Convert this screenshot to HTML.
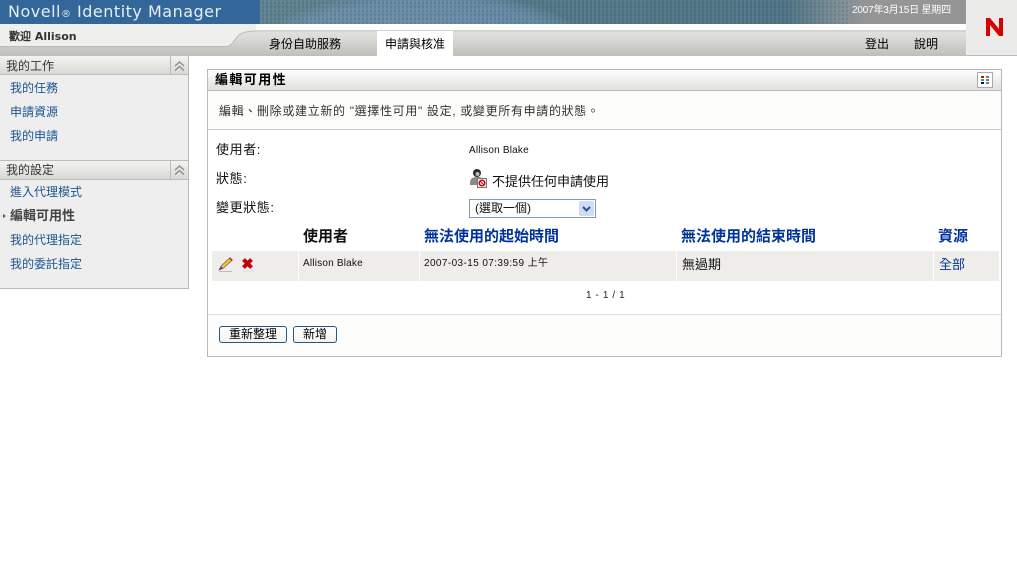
<!DOCTYPE html>
<html><head><meta charset="utf-8"><style>
html,body{margin:0;padding:0;background:#fff;width:1017px;height:571px;overflow:hidden}
body{font-family:"Liberation Sans","WenQuanYi Zen Hei","Noto Sans CJK TC",sans-serif;font-size:12px;color:#000;position:relative}
.a{position:absolute;white-space:nowrap;line-height:14px}
.b{position:absolute}
.lk{color:#1a5590}
.th{font-weight:bold;font-size:15px;line-height:16px}
.bl{color:#003399}
.btn{position:absolute;box-sizing:border-box;height:17px;border:1px solid #1b5a8a;border-radius:3px;background:linear-gradient(#fff,#f3f3ee);text-align:center;line-height:15px;font-size:12px}
.lb{font-size:13px;color:#111;letter-spacing:.6px}
</style></head><body>
<div class="b" style="left:0;top:0;width:260px;height:24px;background:#336699"></div>
<svg class="b" style="left:260px;top:0" width="706" height="24">
<defs><linearGradient id="g"><stop offset="0" stop-color="#5f808e"/><stop offset=".4" stop-color="#517786"/><stop offset=".75" stop-color="#4e7485"/><stop offset=".82" stop-color="#7b8c93"/><stop offset=".86" stop-color="#959595"/><stop offset="1" stop-color="#959595"/></linearGradient>
<radialGradient id="e"><stop offset="0" stop-color="#6f92b4" stop-opacity=".8"/><stop offset=".85" stop-color="#6f92b4" stop-opacity=".6"/><stop offset="1" stop-color="#6f92b4" stop-opacity=".15"/></radialGradient>
<pattern id="t" width="4" height="4" patternUnits="userSpaceOnUse"><rect width="2" height="4" fill="#fff" opacity=".04"/><rect x="2" y="2" width="2" height="2" fill="#000" opacity=".07"/></pattern></defs>
<rect width="706" height="24" fill="url(#g)"/>
<ellipse cx="165" cy="50" rx="165" ry="58" fill="url(#e)"/>
<rect width="590" height="24" fill="url(#t)"/>
</svg>
<div class="a" style="left:8px;top:1px;font-size:16px;line-height:22px;color:#e6eef5;font-family:'DejaVu Sans',sans-serif;letter-spacing:.5px">Novell<span style="font-size:10px">®</span> Identity Manager</div>
<div class="a" style="left:852px;top:4px;font-size:10px;color:#fff;line-height:13px;letter-spacing:-.2px">2007年3月15日 星期四</div>

<div class="b" style="left:0;top:24px;width:966px;height:32px;background:linear-gradient(#e6e7e3,#dcddd9 40%,#bebfb9)"></div>
<svg class="b" style="left:0;top:24px" width="966" height="32"><path d="M0 0H966V7H256C248 7 243 8 239 11C235 14 233 22 226 22H0Z" fill="#efefed"/><path d="M0 22.500H226C233 22 235 14 239 11C243 8 248 7 256 7" fill="none" stroke="#b9bab4"/><rect x="256" y="0" width="710" height="6" fill="#fff"/><rect x="256" y="6" width="710" height="2" fill="#d4d5d0"/></svg>
<div class="a" style="left:9px;top:30px;font-weight:bold;color:#333;font-family:'DejaVu Sans','WenQuanYi Zen Hei',sans-serif;font-size:11px">歡迎 Allison</div>
<div class="a" style="left:269px;top:37px">身份自助服務</div>
<div class="b" style="left:377px;top:31px;width:76px;height:25px;background:#fff"></div>
<div class="a" style="left:385px;top:37px">申請與核准</div>
<div class="a" style="left:865px;top:37px">登出</div>
<div class="a" style="left:914px;top:37px">說明</div>
<div class="b" style="left:966px;top:0;width:51px;height:55px;background:#ebebe9;border-bottom:1px solid #bbb"></div>
<svg class="b" style="left:985px;top:17px" width="19" height="20"><path d="M1 1H5L14 12V1H18V19H14L5 8V19H1Z" fill="#d90000"/></svg>

<div class="b" style="left:0;top:56px;width:188px;height:232px;background:#eee;border-right:1px solid #b8b8b8;border-bottom:1px solid #b8b8b8"></div>
<div class="b" style="left:0;top:56px;width:188px;height:18px;background:linear-gradient(#f3f3f1,#d9d9d5);border-bottom:1px solid #bbb"></div>
<div class="b" style="left:170px;top:56px;width:1px;height:19px;background:#bbb"></div>
<svg class="b" style="left:173px;top:60px" width="13" height="12"><path d="M2 6L6.500 2L11 6M2 10.500L6.500 6.500L11 10.500" fill="none" stroke="#888" stroke-width="1.300"/></svg>
<div class="a" style="left:6px;top:59px;color:#333">我的工作</div>
<div class="a lk" style="left:10px;top:81px">我的任務</div>
<div class="a lk" style="left:10px;top:105px">申請資源</div>
<div class="a lk" style="left:10px;top:129px">我的申請</div>
<div class="b" style="left:0;top:160px;width:188px;height:18px;background:linear-gradient(#f3f3f1,#d9d9d5);border-top:1px solid #bbb;border-bottom:1px solid #bbb"></div>
<div class="b" style="left:170px;top:161px;width:1px;height:18px;background:#bbb"></div>
<svg class="b" style="left:173px;top:164px" width="13" height="12"><path d="M2 6L6.500 2L11 6M2 10.500L6.500 6.500L11 10.500" fill="none" stroke="#888" stroke-width="1.300"/></svg>
<div class="a" style="left:6px;top:163px;color:#333">我的設定</div>
<div class="a lk" style="left:10px;top:185px">進入代理模式</div>
<div class="b" style="left:3px;top:214px;width:0;height:0;border-left:3px solid #555;border-top:2px solid transparent;border-bottom:2px solid transparent"></div>
<div class="a" style="left:10px;top:209px;font-weight:bold;font-size:13px;color:#444">編輯可用性</div>
<div class="a lk" style="left:10px;top:233px">我的代理指定</div>
<div class="a lk" style="left:10px;top:257px">我的委託指定</div>

<div class="b" style="left:207px;top:69px;width:793px;height:286px;border:1px solid #b8b8b8;background:#fff"></div>
<div class="b" style="left:208px;top:70px;width:793px;height:20px;background:linear-gradient(#fff,#dfdfdc);border-bottom:1px solid #bbb"></div>
<div class="b" style="left:208px;top:91px;width:793px;height:38px;background:#fcfcfa;border-bottom:1px solid #ccc"></div>
<div class="a" style="left:215px;top:73px;font-weight:bold;font-size:13px;letter-spacing:1.400px">編輯可用性</div>
<svg class="b" style="left:977px;top:72px" width="16" height="16"><rect x=".5" y=".5" width="15" height="15" fill="#fff" stroke="#aaa"/><rect x="4" y="4" width="3" height="2" fill="#d00"/><rect x="4" y="7" width="3" height="2" fill="#0c0"/><rect x="4" y="10" width="3" height="2" fill="#00c"/><rect x="9" y="4" width="3" height="2" fill="#777"/><rect x="9" y="7" width="3" height="2" fill="#777"/><rect x="9" y="10" width="3" height="2" fill="#777"/></svg>
<div class="a" style="left:219px;top:104px;color:#333;letter-spacing:.67px">編輯、刪除或建立新的 "選擇性可用" 設定, 或變更所有申請的狀態。</div>

<div class="a lb" style="left:216px;top:143px">使用者:</div>
<div class="a" style="left:469px;top:144px;font-size:10px;color:#111;letter-spacing:.2px">Allison Blake</div>
<div class="a lb" style="left:216px;top:172px">狀態:</div>
<svg class="b" style="left:469px;top:168px" width="20" height="20"><path d="M1 15C1 10 4 9 9 9S13 11 13 15V17H1Z" fill="#8a8a8a"/><circle cx="8" cy="5" r="4" fill="#2a2a2a"/><circle cx="8.500" cy="6" r="2" fill="#c9b8a8"/><rect x="8.500" y="10.500" width="9" height="9" fill="#eee" stroke="#777"/><circle cx="13" cy="15" r="2.800" fill="none" stroke="#c00" stroke-width="1.400"/><path d="M11 13L15 17" stroke="#c00"/></svg>
<div class="a" style="left:492px;top:175px;font-size:13px;color:#111">不提供任何申請使用</div>
<div class="a lb" style="left:216px;top:201px">變更狀態:</div>
<div class="b" style="left:469px;top:199px;width:125px;height:17px;border:1px solid #7f9db9;background:#fff"></div>
<div class="a" style="left:475px;top:201px;color:#111">(選取一個)</div>
<svg class="b" style="left:579px;top:201px" width="15" height="15"><rect width="15" height="15" rx="2" fill="#cfdcf7"/><path d="M4 6L7.500 9.500L11 6" fill="none" stroke="#33508c" stroke-width="2"/></svg>

<div class="a th" style="left:303px;top:229px;color:#111">使用者</div>
<div class="a th bl" style="left:424px;top:229px">無法使用的起始時間</div>
<div class="a th bl" style="left:681px;top:229px">無法使用的結束時間</div>
<div class="a th bl" style="left:938px;top:229px">資源</div>

<div class="b" style="left:212px;top:251px;width:86px;height:30px;background:#eeede9"></div>
<div class="b" style="left:299px;top:251px;width:120px;height:30px;background:#eeede9"></div>
<div class="b" style="left:420px;top:251px;width:256px;height:30px;background:#eeede9"></div>
<div class="b" style="left:677px;top:251px;width:256px;height:30px;background:#eeede9"></div>
<div class="b" style="left:934px;top:251px;width:65px;height:30px;background:#eeede9"></div>
<svg class="b" style="left:217px;top:256px" width="17" height="17"><path d="M2 14L4 10L13 1.500L15.500 4L6 12.500Z" fill="#f2c32e" stroke="#555" stroke-width=".6"/><path d="M2 14L4 10L6 12.500Z" fill="#63a"/><path d="M12 2.500L14.500 5L15.500 4L13 1.500Z" fill="#c33"/><path d="M2 15.500H15" stroke="#bbb"/></svg>
<svg class="b" style="left:240px;top:256px" width="16" height="17"><path d="M3.500 3.500L11.500 11.500M11.500 3.500L3.500 11.500" stroke="#c4000a" stroke-width="4"/><path d="M3 15H14" stroke="#ddd"/></svg>
<div class="a" style="left:303px;top:257px;font-size:10px;color:#111;letter-spacing:.2px">Allison Blake</div>
<div class="a" style="left:424px;top:257px;font-size:10px;color:#111;letter-spacing:.4px">2007-03-15 07:39:59 上午</div>
<div class="a" style="left:682px;top:258px;font-size:13px;color:#111">無過期</div>
<div class="a bl" style="left:939px;top:258px;font-size:13px">全部</div>
<div class="a" style="left:586px;top:289px;font-size:10px;color:#222;letter-spacing:.6px">1 - 1 / 1</div>

<div class="b" style="left:208px;top:314px;width:793px;height:41px;background:#fcfcfa;border-top:1px solid #ddd;box-sizing:border-box"></div>
<div class="btn" style="left:219px;top:326px;width:68px">重新整理</div>
<div class="btn" style="left:293px;top:326px;width:44px">新增</div>
</body></html>
